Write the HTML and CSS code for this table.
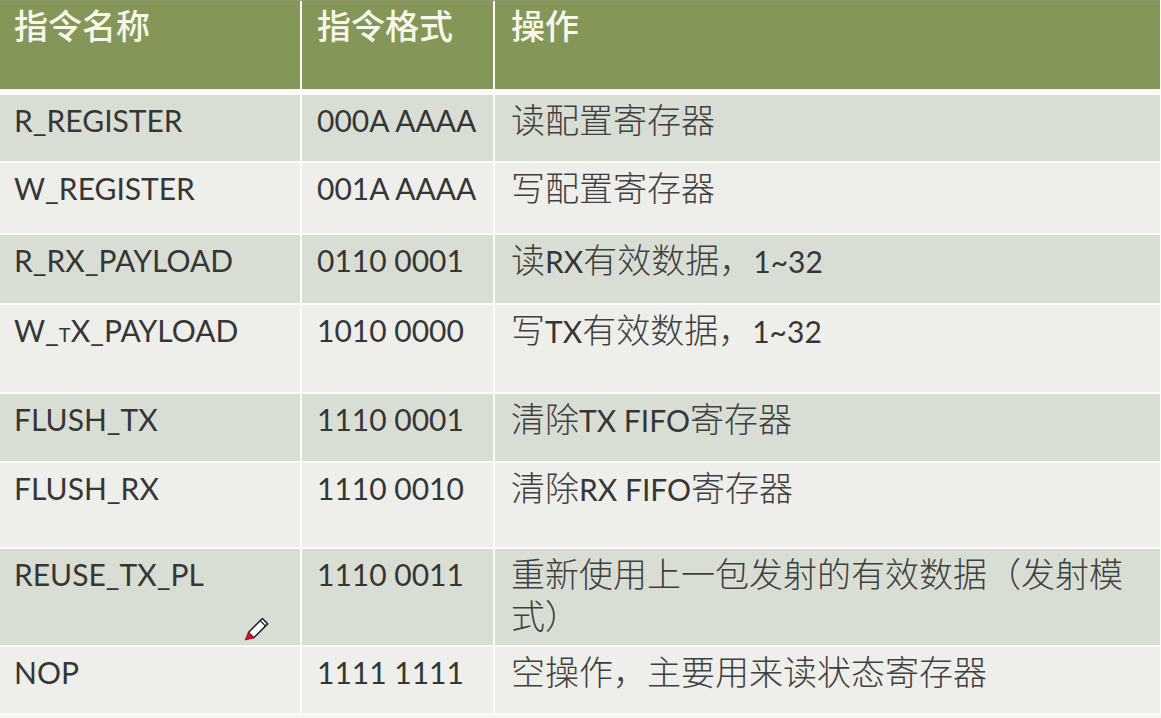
FILE: index.html
```html
<!DOCTYPE html>
<html lang="zh-CN">
<head>
<meta charset="utf-8">
<title>指令表</title>
<link rel="stylesheet" href="styles.css">
</head>
<body>
<div class="table">
  <div class="row head">
    <div class="cell">指令名称</div>
    <div class="cell">指令格式</div>
    <div class="cell">操作</div>
  </div>
  <div class="row odd h66">
    <div class="cell">R_REGISTER</div>
    <div class="cell">000A AAAA</div>
    <div class="cell op">读配置寄存器</div>
  </div>
  <div class="row even h70">
    <div class="cell">W_REGISTER</div>
    <div class="cell">001A AAAA</div>
    <div class="cell op">写配置寄存器</div>
  </div>
  <div class="row odd h68">
    <div class="cell">R_RX_PAYLOAD</div>
    <div class="cell">0110 0001</div>
    <div class="cell op">读<span class="lat">RX</span>有效数据，<span class="lat">1~32</span></div>
  </div>
  <div class="row even h87">
    <div class="cell">W_<span class="small">T</span>X_PAYLOAD</div>
    <div class="cell">1010 0000</div>
    <div class="cell op">写<span class="lat">TX</span>有效数据，<span class="lat">1~32</span></div>
  </div>
  <div class="row odd h67">
    <div class="cell">FLUSH_TX</div>
    <div class="cell">1110 0001</div>
    <div class="cell op">清除<span class="lat">TX FIFO</span>寄存器</div>
  </div>
  <div class="row even h84">
    <div class="cell">FLUSH_RX</div>
    <div class="cell">1110 0010</div>
    <div class="cell op">清除<span class="lat">RX FIFO</span>寄存器</div>
  </div>
  <div class="row odd h96">
    <div class="cell pen-cell">REUSE_TX_PL
      <svg class="pen" width="30" height="30" viewBox="0 0 28 28" aria-hidden="true">
        <path d="M6 20 L19 7 L24 12 L11 25 Z" fill="#ffffff" stroke="#222" stroke-width="1.4" stroke-linejoin="round"/>
        <path d="M17 9 L22 14" stroke="#222" stroke-width="1.2"/>
        <path d="M6 20 L11 25 L3 27 Z" fill="#e0102a" stroke="#8a0010" stroke-width="0.8" stroke-linejoin="round"/>
      </svg>
    </div>
    <div class="cell">1110 0011</div>
    <div class="cell op">重新使用上一包发射的有效数据（发射模式）</div>
  </div>
  <div class="row even h66">
    <div class="cell">NOP</div>
    <div class="cell">1111 1111</div>
    <div class="cell op">空操作，主要用来读状态寄存器</div>
  </div>
</div>
</body>
</html>
```
FILE: styles.css
```css
html, body {
  margin: 0;
  padding: 0;
  background: #f5f5f1;
}
body {
  width: 1161px;
  height: 718px;
  overflow: hidden;
  font-family: Lato, "Noto Sans CJK SC", sans-serif;
  color: #363636;
}
.table {
  display: flex;
  flex-direction: column;
  gap: 2px;
  width: 1160px;
  background: #fbfbf7;
  border-right: 1px solid #fbfbf7;
  padding-bottom: 2px;
}
.row {
  display: grid;
  grid-template-columns: 300px 191px 665px;
  column-gap: 2px;
}
.cell {
  padding: 7px 14px 0 14px;
  font-size: 30px;
  line-height: 36px;
  white-space: nowrap;
  box-sizing: border-box;
}
.row .cell:nth-child(2) { padding-left: 15px; }
.cell.op {
  white-space: normal;
  padding: 3px 12px 0 16px;
  font-family: "Noto Sans CJK SC", sans-serif;
  font-size: 34px;
  font-weight: 300;
  line-height: 42px;
  color: #404040;
}
.lat {
  font-family: Lato, sans-serif;
  font-size: 30px;
  font-weight: 400;
  color: #363636;
}
.head {
  height: 88px;
  margin-bottom: 4px;
  border-top: 1px solid #8f9a6c;
}
.head .cell {
  background: #849759;
  color: #f7f7ea;
  font-family: "Noto Sans CJK SC", sans-serif;
  font-size: 34px;
  font-weight: 500;
  line-height: 40px;
  padding-top: 4px;
}
.head .cell:nth-child(3) { padding-left: 16px; }
.odd .cell { background: #d9ded4; }
.even .cell { background: #eeefeb; }
.h66 { height: 66px; }
.h67 { height: 67px; }
.h68 { height: 68px; }
.h70 { height: 70px; }
.h84 { height: 84px; }
.h87 { height: 87px; }
.h96 { height: 96px; }
.small { font-size: 20px; }
.pen-cell { position: relative; }
.pen {
  position: absolute;
  left: 242px;
  top: 62px;
}
```
